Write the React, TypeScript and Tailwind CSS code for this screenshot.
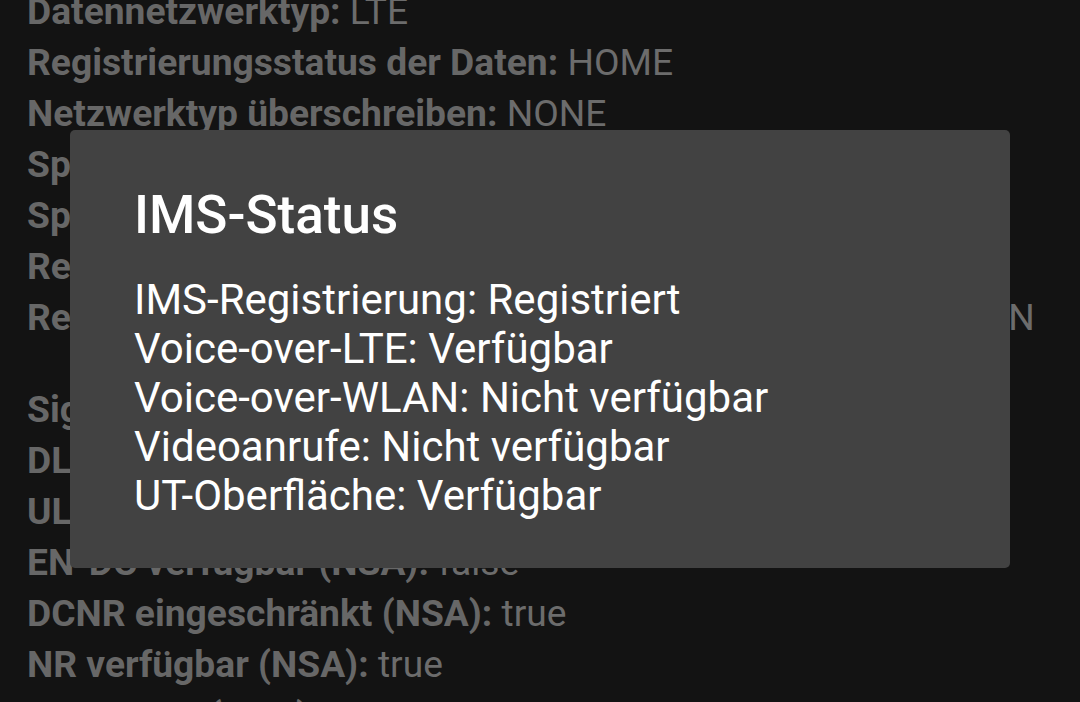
import React from "react";

type Row = { label: string; value: string };

const groupA: Row[] = [
  { label: "Datennetzwerktyp:", value: "LTE" },
  { label: "Registrierungsstatus der Daten:", value: "HOME" },
  { label: "Netzwerktyp überschreiben:", value: "NONE" },
  { label: "Sprachnetzwerktyp:", value: "LTE" },
  { label: "Sprach-Registrierungsstatus:", value: "HOME" },
  { label: "Registrierungsstatus WLAN-Daten:", value: "NOT_REG" },
  { label: "Registrierungsstatus für WLAN-Sprachdienste:", value: "NO_DOMAIN" },
];

const groupB: Row[] = [
  { label: "Signalstärke:", value: "-98 dBm   42 asu" },
  { label: "DL-Bandbreite (kbit/s):", value: "15000" },
  { label: "UL-Bandbreite (kbit/s):", value: "15000" },
  { label: "EN-DC verfügbar (NSA):", value: "false" },
  { label: "DCNR eingeschränkt (NSA):", value: "true" },
  { label: "NR verfügbar (NSA):", value: "true" },
  { label: "NR-Status (NSA):", value: "NONE" },
];

const imsLines = [
  "IMS-Registrierung: Registriert",
  "Voice-over-LTE: Verfügbar",
  "Voice-over-WLAN: Nicht verfügbar",
  "Videoanrufe: Nicht verfügbar",
  "UT-Oberfläche: Verfügbar",
];

function InfoRow({ label, value }: Row) {
  return (
    <div className="whitespace-nowrap text-[37.2px] leading-[51px]">
      <span className="font-bold text-[#676767]">{label}</span>{" "}
      <span className="text-[#6c6c6c]">{value}</span>
    </div>
  );
}

export default function App() {
  return (
    <div
      className="relative w-[1080px] h-[702px] overflow-hidden bg-[#131313]"
      style={{ fontFamily: "Roboto, 'Noto Sans', sans-serif" }}
    >
      <div className="flex flex-col px-[27px] -mt-[14px]">
        {groupA.map(r => <InfoRow key={r.label} {...r} />)}
        <div className="h-[41px]" />
        {groupB.map(r => <InfoRow key={r.label} {...r} />)}
      </div>

      {/* dialog */}
      <div className="absolute left-[70px] top-[130px] w-[940px] h-[438px] rounded-[5px] bg-[#424242] px-[64px] pt-[55px]">
        <h2 className="text-[53px] leading-[60px] font-medium text-white">IMS-Status</h2>
        <div className="mt-[30px] flex flex-col">
          {imsLines.map(l => (
            <p key={l} className="text-[42px] leading-[49px] text-white whitespace-nowrap">{l}</p>
          ))}
        </div>
      </div>
    </div>
  );
}
